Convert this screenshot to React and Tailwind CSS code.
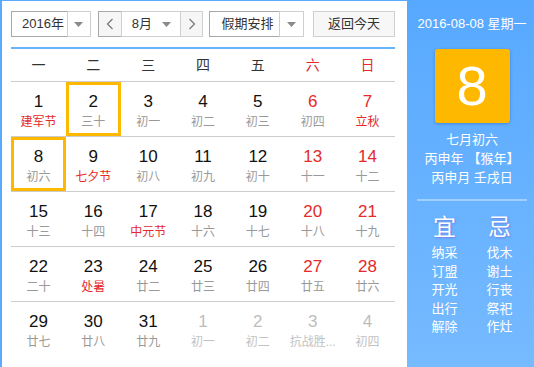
import React from "react";

const weekDays = ["一", "二", "三", "四", "五", "六", "日"];

// each row of August 2016, last row spills into September
const weeks = [
  [
    { d: 1, l: "建军节", fest: true },
    { d: 2, l: "三十" },
    { d: 3, l: "初一" },
    { d: 4, l: "初二" },
    { d: 5, l: "初三" },
    { d: 6, l: "初四" },
    { d: 7, l: "立秋", fest: true },
  ],
  [
    { d: 8, l: "初六" },
    { d: 9, l: "七夕节", fest: true },
    { d: 10, l: "初八" },
    { d: 11, l: "初九" },
    { d: 12, l: "初十" },
    { d: 13, l: "十一" },
    { d: 14, l: "十二" },
  ],
  [
    { d: 15, l: "十三" },
    { d: 16, l: "十四" },
    { d: 17, l: "中元节", fest: true },
    { d: 18, l: "十六" },
    { d: 19, l: "十七" },
    { d: 20, l: "十八" },
    { d: 21, l: "十九" },
  ],
  [
    { d: 22, l: "二十" },
    { d: 23, l: "处暑", fest: true },
    { d: 24, l: "廿二" },
    { d: 25, l: "廿三" },
    { d: 26, l: "廿四" },
    { d: 27, l: "廿五" },
    { d: 28, l: "廿六" },
  ],
  [
    { d: 29, l: "廿七" },
    { d: 30, l: "廿八" },
    { d: 31, l: "廿九" },
    { d: 1, l: "初一", other: true },
    { d: 2, l: "初二", other: true },
    { d: 3, l: "抗战胜...", other: true },
    { d: 4, l: "初四", other: true },
  ],
];

const yi = ["纳采", "订盟", "开光", "出行", "解除"];
const ji = ["伐木", "谢土", "行丧", "祭祀", "作灶"];

const Caret = () => (
  <svg width="9" height="5" viewBox="0 0 9 5">
    <path d="M0 0h9L4.5 5z" fill="#8a8a8a" />
  </svg>
);

const Chevron = ({ dir }) => (
  <svg width="8" height="12" viewBox="0 0 8 12">
    <path
      d={dir === "left" ? "M6.5 1L1.5 6l5 5" : "M1.5 1l5 5-5 5"}
      fill="none"
      stroke="#777"
      strokeWidth="1.2"
    />
  </svg>
);

const DayCell = ({ day, col, selected }) => {
  const weekend = col >= 5;
  let numColor = "text-[#111]";
  if (day.other) numColor = "text-[#bdbdbd]";
  else if (weekend) numColor = "text-[#e42a2a]";

  let lunarColor = "text-[#999]";
  if (day.other) lunarColor = "text-[#c2c2c2]";
  else if (day.fest) lunarColor = "text-[#e42a2a]";

  return (
    <div
      className={`flex flex-col items-center ${
        selected ? "border-[3px] border-[#ffb800] pt-[6px]" : "pt-[9px]"
      }`}
    >
      <span className={`text-[17px] leading-[22px] ${numColor}`}>{day.d}</span>
      <span className={`text-[12px] leading-[18px] whitespace-nowrap ${lunarColor}`}>
        {day.l}
      </span>
    </div>
  );
};

export default function App() {
  return (
    <div
      className="w-[534px] h-[367px] overflow-hidden flex border-l-2 border-t border-[#59abff] bg-white"
      style={{ fontFamily: '"Liberation Sans", "Noto Sans CJK SC", sans-serif' }}
    >
      {/* left: calendar */}
      <div className="w-[405px] shrink-0 pl-[9px] pr-[12px] pt-[10px]">
        {/* toolbar */}
        <div className="flex items-center h-[26px] text-[13px] text-[#333]">
          <div className="flex h-full w-[80px]">
            <div className="flex items-center pl-[10px] w-[56px] border border-r-0 border-[#a8a8a8]">
              2016年
            </div>
            <div className="flex items-center justify-center flex-1 border border-[#cfcfcf]">
              <Caret />
            </div>
          </div>

          <div className="flex h-full w-[106px] ml-[7px]">
            <div className="flex items-center justify-center w-[23px] bg-[#f6f6f6] border border-r-0 border-[#a8a8a8]">
              <Chevron dir="left" />
            </div>
            <div className="flex items-center justify-between w-[60px] pl-[10px] pr-[9px] border border-[#cfcfcf]">
              <span>8月</span>
              <Caret />
            </div>
            <div className="flex items-center justify-center flex-1 bg-[#f6f6f6] border border-l-0 border-[#cfcfcf]">
              <Chevron dir="right" />
            </div>
          </div>

          <div className="flex h-full w-[95px] ml-[6px]">
            <div className="flex items-center pl-[11px] w-[70px] border border-r-0 border-[#a8a8a8]">
              假期安排
            </div>
            <div className="flex items-center justify-center flex-1 border border-[#cfcfcf]">
              <Caret />
            </div>
          </div>

          <button className="h-full w-[82px] ml-[9px] bg-[#f7f7f7] border border-[#cfcfcf] text-[13px] text-[#333]">
            返回今天
          </button>
        </div>

        <div className="h-[2px] mt-[10px] bg-[#68b1fb]" />

        {/* week header */}
        <div className="grid grid-cols-7 h-[33px] border-b border-[#cccccc] text-[14px]">
          {weekDays.map((w, i) => (
            <div
              key={w}
              className={`flex items-center justify-center ${
                i >= 5 ? "text-[#e42a2a]" : "text-[#333]"
              }`}
            >
              {w}
            </div>
          ))}
        </div>

        {/* days */}
        {weeks.map((week, r) => (
          <div
            key={r}
            className={`grid grid-cols-7 h-[55px] ${
              r < weeks.length - 1 ? "border-b border-[#cccccc]" : ""
            }`}
          >
            {week.map((day, c) => (
              <DayCell
                key={c}
                day={day}
                col={c}
                selected={(r === 0 && c === 1) || (r === 1 && c === 0)}
              />
            ))}
          </div>
        ))}
      </div>

      {/* right: today panel */}
      <div className="flex-1 flex flex-col items-center pl-[3px] bg-gradient-to-b from-[#57a9ff] to-[#76baff] text-white">
        <div className="mt-[15px] text-[13px] leading-[16px] whitespace-nowrap">
          2016-08-08 星期一
        </div>
        <div className="mt-[17px] w-[75px] h-[74px] rounded-[3px] bg-[#ffb800] shadow-[0_1px_3px_rgba(0,60,140,0.35)] flex items-center justify-center">
          <span className="text-[56px] leading-none">8</span>
        </div>
        <div className="mt-[7px] text-[13px] leading-[19px] text-center whitespace-nowrap">
          <div>七月初六</div>
          <div className="flex justify-center">
            <span>丙申年</span>
            <span className="inline-block w-[17px] text-right">【</span>
            <span>猴年</span>
            <span className="inline-block w-[13px] text-left">】</span>
          </div>
          <div>丙申月 壬戌日</div>
        </div>
        <div className="mt-[12px] w-[110px] h-[2px] bg-[#9fd0ff]" />
        <div className="grid grid-cols-2 w-[110px] mt-[12px] text-center">
          <div className="text-[23px] leading-[28px] [text-shadow:1px_1px_2px_rgba(120,60,200,0.45)]">
            宜
          </div>
          <div className="text-[23px] leading-[28px] [text-shadow:1px_1px_2px_rgba(120,60,200,0.45)]">
            忌
          </div>
          <div className="mt-[3px] text-[13px] leading-[18.5px]">
            {yi.map((t) => (
              <div key={t}>{t}</div>
            ))}
          </div>
          <div className="mt-[3px] text-[13px] leading-[18.5px]">
            {ji.map((t) => (
              <div key={t}>{t}</div>
            ))}
          </div>
        </div>
      </div>
    </div>
  );
}
